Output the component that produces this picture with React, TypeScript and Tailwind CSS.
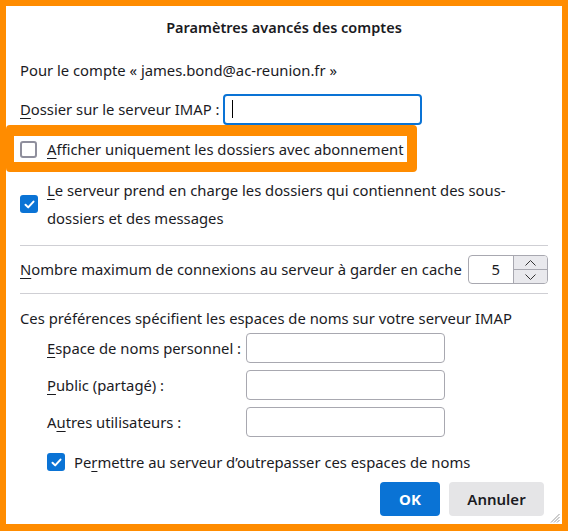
import React from "react";

const font = { fontFamily: '"Noto Sans", "Open Sans", sans-serif' };

const inputClassName =
  "h-[30px] w-[199px] rounded-[4px] border border-[#a8a8b0] bg-white outline-none";

function Check({ checked }: { checked?: boolean }) {
  return checked ? (
    <span className="flex h-[18px] w-[18px] shrink-0 items-center justify-center rounded-[3px] bg-[#0a73d5]">
      <svg width="13" height="13" viewBox="0 0 13 13" fill="none">
        <path
          d="M2.5 6.8 L5.2 9.4 L10.5 3.6"
          stroke="white"
          strokeWidth="2"
          strokeLinecap="round"
          strokeLinejoin="round"
        />
      </svg>
    </span>
  ) : (
    <span className="h-[17px] w-[17px] shrink-0 rounded-[3px] border-2 border-[#8f8f9d] bg-white" />
  );
}

function Key({ children }: { children: React.ReactNode }) {
  return <span className="underline underline-offset-[3px]">{children}</span>;
}

export default function App() {
  return (
    <div
      style={font}
      className="relative h-[531px] w-[568px] overflow-hidden border-[6px] border-b-[7px] border-[#ff8c00] bg-white text-[14.8px] text-[#1b1b1f]"
    >
      <div className="flex h-[44px] items-center justify-center text-[14.5px] font-semibold">
        Paramètres avancés des comptes
      </div>

      <div className="flex flex-col pl-[14px] pr-[14px]">
        <div className="mt-[6px] flex h-[28px] items-center">
          Pour le compte « james.bond@ac-reunion.fr »
        </div>

        <div className="mt-[10px] flex h-[30px] items-center">
          <span className="w-[203px] whitespace-nowrap">
            <Key>D</Key>ossier sur le serveur IMAP :
          </span>
          <div className="flex h-[31px] w-[199px] items-center rounded-[4px] border-2 border-[#0a73d5] pl-[7px]">
            <span className="h-[18px] w-px bg-black" />
          </div>
        </div>

        <div className="mt-[11px] flex h-[28px] items-center gap-[10px]">
          <Check />
          <span className="whitespace-nowrap">
            <Key>A</Key>fficher uniquement les dossiers avec abonnement
          </span>
        </div>

        <div className="mt-[13px] flex items-center gap-[9px]">
          <Check checked />
          <span className="leading-[28px]">
            <Key>L</Key>e serveur prend en charge les dossiers qui contiennent des sous-
            <br />
            dossiers et des messages
          </span>
        </div>

        <div className="mt-[13px] h-px w-full bg-[#cfcfd4]" />

        <div className="mt-[9px] flex h-[29px] items-center justify-between">
          <span className="whitespace-nowrap">
            <Key>N</Key>ombre maximum de connexions au serveur à garder en cache
          </span>
          <div className="flex h-[29px] w-[80px] overflow-hidden rounded-[4px] border border-[#a8a8b0]">
            <div className="flex flex-1 items-center justify-end pr-[13px]">5</div>
            <div className="flex w-[34px] flex-col border-l border-[#a8a8b0] bg-[#e9e9ed]">
              <div className="flex flex-1 items-center justify-center border-b border-[#a8a8b0]">
                <svg width="11" height="6" viewBox="0 0 11 6" fill="none">
                  <path d="M0.5 5.5 L5.5 0.5 L10.5 5.5" stroke="#333" strokeWidth="1" />
                </svg>
              </div>
              <div className="flex flex-1 items-center justify-center">
                <svg width="11" height="6" viewBox="0 0 11 6" fill="none">
                  <path d="M0.5 0.5 L5.5 5.5 L10.5 0.5" stroke="#333" strokeWidth="1" />
                </svg>
              </div>
            </div>
          </div>
        </div>

        <div className="mt-[9px] h-px w-full bg-[#cfcfd4]" />

        <div className="mt-[10px] flex h-[28px] items-center whitespace-nowrap">
          Ces préférences spécifient les espaces de noms sur votre serveur IMAP
        </div>

        <div className="mt-px grid grid-cols-[199px_199px] gap-y-[7px] pl-[27px]">
          <span className="flex h-[30px] items-center whitespace-nowrap">
            <Key>E</Key>space de noms personnel :
          </span>
          <div className={inputClassName} />
          <span className="flex h-[30px] items-center">
            <Key>P</Key>ublic (partagé) :
          </span>
          <div className={inputClassName} />
          <span className="flex h-[30px] items-center">
            A<Key>u</Key>tres utilisateurs :
          </span>
          <div className={inputClassName} />
        </div>

        <div className="mt-[11px] flex h-[28px] items-center gap-[9px] pl-[27px]">
          <Check checked />
          <span className="whitespace-nowrap">
            Pe<Key>r</Key>mettre au serveur d’outrepasser ces espaces de noms
          </span>
        </div>

        <div className="mt-[6px] flex justify-end gap-[9px] pr-[4px]">
          <button className="h-[34px] w-[60px] rounded-[4px] bg-[#0a73d5] text-[15px] font-bold text-white">
            OK
          </button>
          <button className="h-[34px] w-[95px] rounded-[4px] bg-[#e5e5e7] text-[15px] font-semibold">
            Annuler
          </button>
        </div>
      </div>

      <svg
        className="absolute bottom-[1px] right-[2px]"
        width="10"
        height="10"
        viewBox="0 0 10 10"
      >
        <path d="M9.5 1 L1 9.5 M9.5 4 L4 9.5 M9.5 7 L7 9.5" stroke="#9a9a9a" strokeWidth="1" />
      </svg>

      <div className="absolute left-0 top-[119px] h-[47px] w-[411px] rounded-[4px] border-[10px] border-t-[11px] border-l-[8px] border-[#ff8c00]" />
    </div>
  );
}
